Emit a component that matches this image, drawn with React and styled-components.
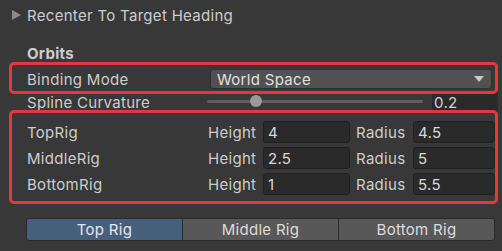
import React from "react";
import styled, { createGlobalStyle } from "styled-components";

const Global = createGlobalStyle`
  html, body { margin: 0; padding: 0; background: #383838; }
  body { width: 502px; height: 251px; overflow: hidden; font-family: Inter, "Noto Sans", sans-serif; font-size: 15px; letter-spacing: 0.3px; color: #cdcdcd; }
  * { box-sizing: border-box; }
`;

const Page = styled.div`
  display: flex;
  flex-direction: column;
  width: 502px;
  height: 251px;
  padding-top: 3px;
`;

const FoldRow = styled.div`
  display: flex;
  align-items: center;
  height: 24px;
  padding-left: 12px;
  gap: 6px;
`;

const Arrow = styled.span`
  width: 0;
  height: 0;
  border-top: 5px solid transparent;
  border-bottom: 5px solid transparent;
  border-left: 9px solid #8c8c8c;
`;

const Header = styled.div`
  font-weight: 700;
  padding-left: 27px;
  margin-top: 19px;
  height: 16px;
  line-height: 16px;
`;

const Highlight = styled.div`
  margin: 0 4px 0 9px;
  border: 3px solid #e5383d;
  border-radius: 5px;
  background: #383838;
  padding: ${(p) => p.$pad};
  display: flex;
  flex-direction: column;
  gap: ${(p) => p.$gap || 0}px;
  position: relative;
  z-index: 1;
`;

const Row = styled.div`
  display: flex;
  align-items: center;
  height: ${(p) => p.$h}px;
`;

const Label = styled.div`
  width: ${(p) => p.$w}px;
  padding-left: ${(p) => p.$pl || 0}px;
  flex-shrink: 0;
  white-space: nowrap;
`;

const Dropdown = styled.div`
  flex: 1;
  height: 20px;
  background: #515151;
  border: 1px solid #303030;
  border-radius: 3px;
  display: flex;
  align-items: center;
  justify-content: space-between;
  padding: 0 7px 0 6px;
  color: #e0e0e0;
`;

const DownArrow = styled.span`
  width: 0;
  height: 0;
  border-left: 5px solid transparent;
  border-right: 5px solid transparent;
  border-top: 6px solid #c8c8c8;
`;

const SliderRow = styled.div`
  display: flex;
  align-items: center;
  height: 16px;
  padding-left: 27px;
`;

const Track = styled.div`
  width: 216px;
  height: 3px;
  background: #5e5e5e;
  border-radius: 2px;
  position: relative;
  margin-left: 180px;
  margin-top: -2px;
`;

const Thumb = styled.div`
  position: absolute;
  top: -5px;
  width: 12px;
  height: 12px;
  border-radius: 50%;
  background: #9a9a9a;
`;

const NumField = styled.div`
  margin-left: 9px;
  width: 66px;
  height: 22px;
  background: #2a2a2a;
  padding-left: 2px;
  line-height: 22px;
  margin-top: 2px;
  color: #d2d2d2;
`;

const Field = styled.div`
  width: ${(p) => p.$w}px;
  height: 22px;
  background: #2a2a2a;
  border: 1px solid #202020;
  border-radius: 3px;
  padding-left: 4px;
  display: flex;
  align-items: center;
  color: #d8d8d8;
`;

const Tabs = styled.div`
  display: flex;
  margin: 14px 7px 0 26px;
  height: 23px;
`;

const Tab = styled.div`
  flex: 1;
  display: flex;
  align-items: center;
  justify-content: center;
  background: ${(p) => (p.$active ? "#46607c" : "#585858")};
  border: 1px solid #2b2b2b;
  margin-left: -1px;
  color: ${(p) => (p.$active ? "#e4e8ec" : "#dcdcdc")};
  &:first-child { border-radius: 3px 0 0 3px; margin-left: 0; }
  &:last-child { border-radius: 0 3px 3px 0; }
`;

const rigs = [
  { name: "TopRig", h: "4", r: "4.5" },
  { name: "MiddleRig", h: "2.5", r: "5" },
  { name: "BottomRig", h: "1", r: "5.5" },
];

export default function App() {
  return (
    <Page>
      <Global />
      <FoldRow>
        <Arrow />
        <span>Recenter To Target Heading</span>
      </FoldRow>
      <Header>Orbits</Header>
      <Highlight $pad="4px 3px 2px 15px">
        <Row $h={20}>
          <Label $w={183}>Binding Mode</Label>
          <Dropdown>
            <span>World Space</span>
            <DownArrow />
          </Dropdown>
        </Row>
      </Highlight>
      <SliderRow>
        <Label $w={0}>Spline Curvature</Label>
        <Track>
          <Thumb style={{ left: `${(0.2 / 1) * 216 + 0}px` }} />
        </Track>
        <NumField>0.2</NumField>
      </SliderRow>
      <Highlight $pad="8px 0 6px 15px" $gap={4}>
        {rigs.map((r) => (
          <Row $h={22} key={r.name}>
            <Label $w={181}>{r.name}</Label>
            <Label $w={55}>Height</Label>
            <Field $w={87}>{r.h}</Field>
            <Label $w={63} $pl={6}>Radius</Label>
            <Field $w={82}>{r.r}</Field>
          </Row>
        ))}
      </Highlight>
      <Tabs>
        <Tab $active>Top Rig</Tab>
        <Tab>Middle Rig</Tab>
        <Tab>Bottom Rig</Tab>
      </Tabs>
    </Page>
  );
}
